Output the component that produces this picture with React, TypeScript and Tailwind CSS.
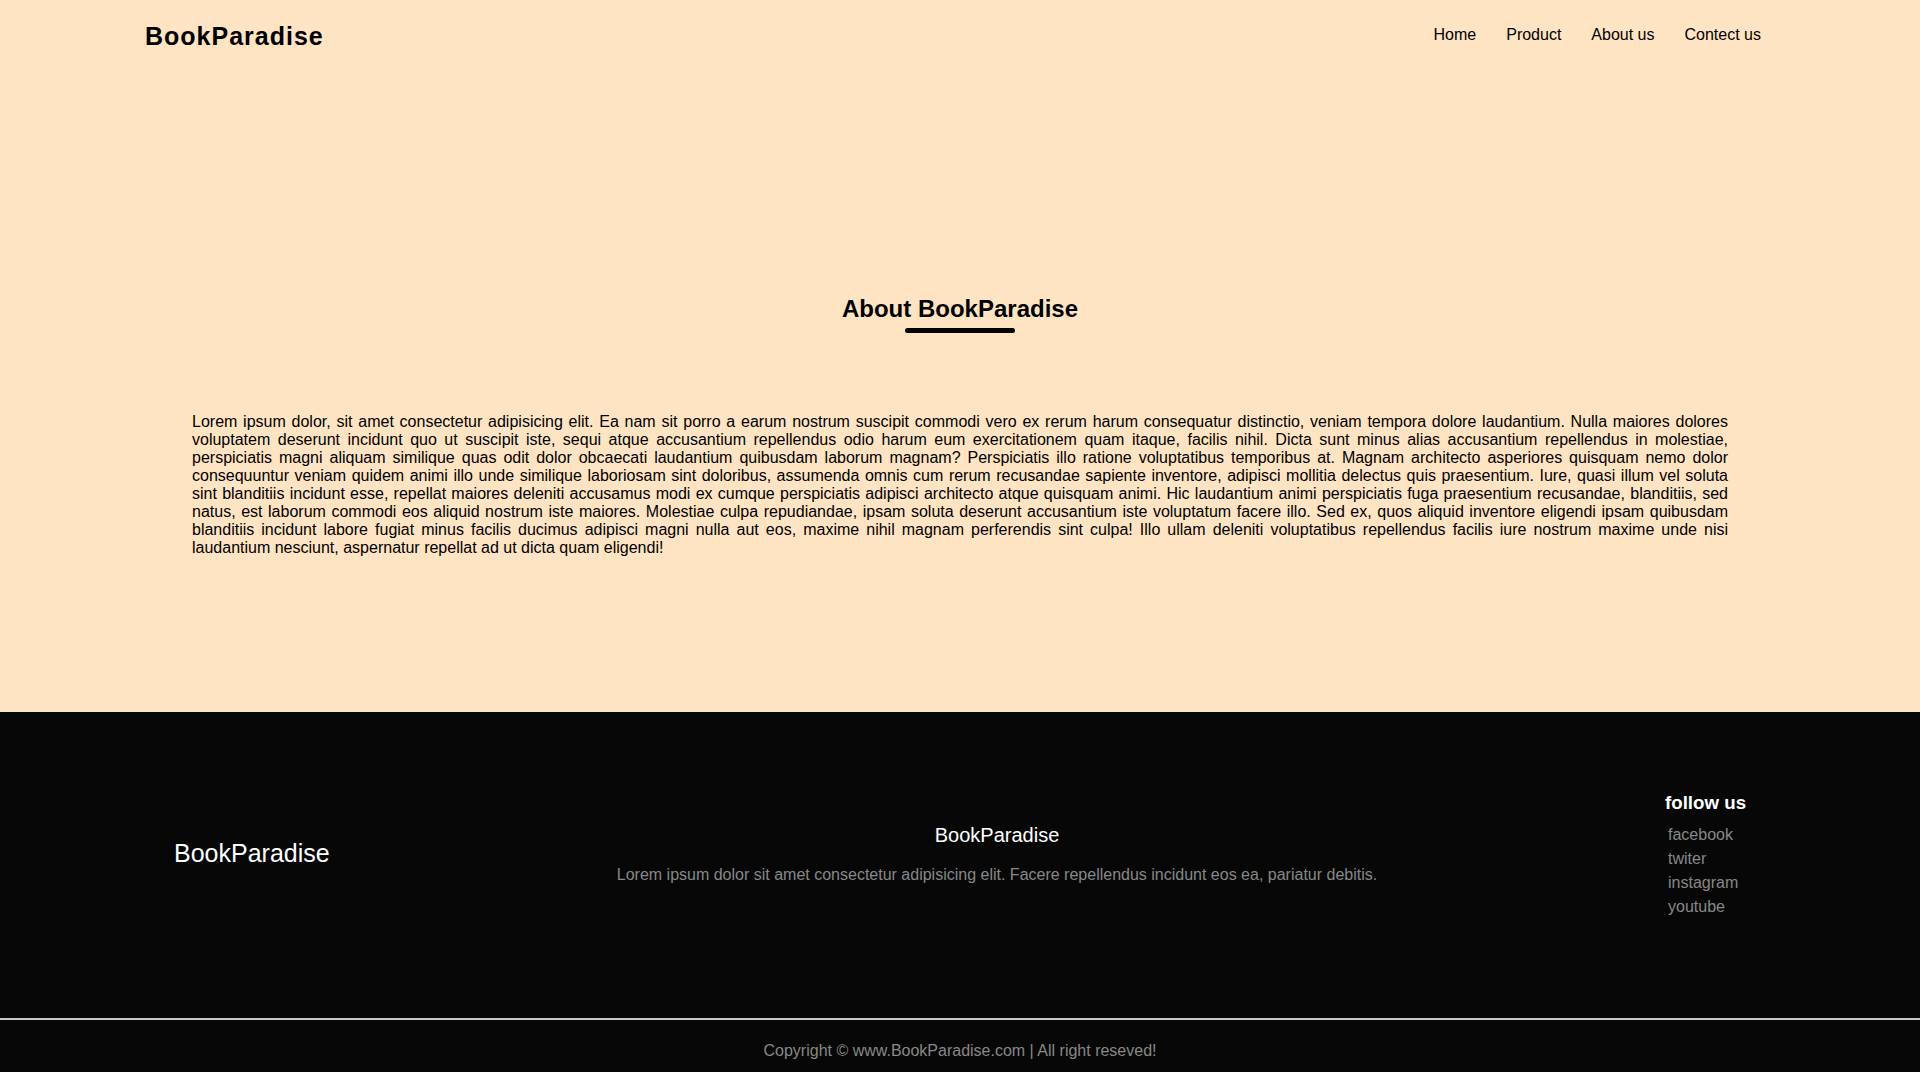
const links = ['Home', 'Product', 'About us', 'Contect us']
const socials = ['facebook', 'twiter', 'instagram', 'youtube']

const about =
  'Lorem ipsum dolor, sit amet consectetur adipisicing elit. Ea nam sit porro a earum nostrum suscipit commodi vero ex rerum harum consequatur distinctio, veniam tempora dolore laudantium. Nulla maiores dolores voluptatem deserunt incidunt quo ut suscipit iste, sequi atque accusantium repellendus odio harum eum exercitationem quam itaque, facilis nihil. Dicta sunt minus alias accusantium repellendus in molestiae, perspiciatis magni aliquam similique quas odit dolor obcaecati laudantium quibusdam laborum magnam? Perspiciatis illo ratione voluptatibus temporibus at. Magnam architecto asperiores quisquam nemo dolor consequuntur veniam quidem animi illo unde similique laboriosam sint doloribus, assumenda omnis cum rerum recusandae sapiente inventore, adipisci mollitia delectus quis praesentium. Iure, quasi illum vel soluta sint blanditiis incidunt esse, repellat maiores deleniti accusamus modi ex cumque perspiciatis adipisci architecto atque quisquam animi. Hic laudantium animi perspiciatis fuga praesentium recusandae, blanditiis, sed natus, est laborum commodi eos aliquid nostrum iste maiores. Molestiae culpa repudiandae, ipsam soluta deserunt accusantium iste voluptatum facere illo. Sed ex, quos aliquid inventore eligendi ipsam quibusdam blanditiis incidunt labore fugiat minus facilis ducimus adipisci magni nulla aut eos, maxime nihil magnam perferendis sint culpa! Illo ullam deleniti voluptatibus repellendus facilis iure nostrum maxime unde nisi laudantium nesciunt, aspernatur repellat ad ut dicta quam eligendi!'

export default function App() {
  return (
    <div className="min-h-screen bg-[#ffe4c4] font-['Liberation_Sans',Arial,sans-serif] text-black">
      {/* Header */}
      <header className="flex h-[70px] items-center justify-between pl-[145px] pr-[159px]">
        <h1 className="mt-[3px] text-[25px] font-bold tracking-[1px]">BookParadise</h1>
        <nav className="flex gap-[30px] text-[16px]">
          {links.map((l) => (
            <a key={l} href="#" className="hover:underline">
              {l}
            </a>
          ))}
        </nav>
      </header>

      {/* About */}
      <section className="flex h-[642px] flex-col items-center pt-[225px]">
        <h2 className="text-[24px] font-bold leading-[27.6px]">About BookParadise</h2>
        <div className="mt-[5px] h-[5px] w-[110px] rounded-full bg-black" />
        <p className="mt-[80px] w-full px-[192px] text-justify text-[16px] leading-[18px]">{about}</p>
      </section>

      {/* Footer */}
      <footer className="h-[360px] bg-[#070707]">
        <div className="flex h-[284px] items-center">
          <div className="w-[607px] pl-[174px]">
            <h2 className="text-[25px] text-white">BookParadise</h2>
          </div>
          <div className="flex w-[780px] flex-col items-center text-center">
            <h3 className="text-[20px] leading-[23px] text-white">BookParadise</h3>
            <p className="mt-[19px] whitespace-nowrap text-[16px] leading-[18.4px] text-[#888]">
              Lorem ipsum dolor sit amet consectetur adipisicing elit. Facere repellendus incidunt eos ea, pariatur debitis.
            </p>
          </div>
          <div className="pl-[278px]">
            <h3 className="pt-[3px] text-[18.72px] font-bold leading-[21.5px] text-white">follow us</h3>
            <ul className="mt-[9px] pl-[3px] text-[16px] leading-[24px] text-[#888]">
              {socials.map((s) => (
                <li key={s}>
                  <a href="#">{s}</a>
                </li>
              ))}
            </ul>
          </div>
        </div>
        <div className="mt-[22px] h-[2px] bg-[#c8c8c8]" />
        <p className="pt-[22px] text-center text-[16px] leading-[18.4px] text-[#888]">
          Copyright © www.BookParadise.com | All right reseved!
        </p>
      </footer>
    </div>
  )
}
